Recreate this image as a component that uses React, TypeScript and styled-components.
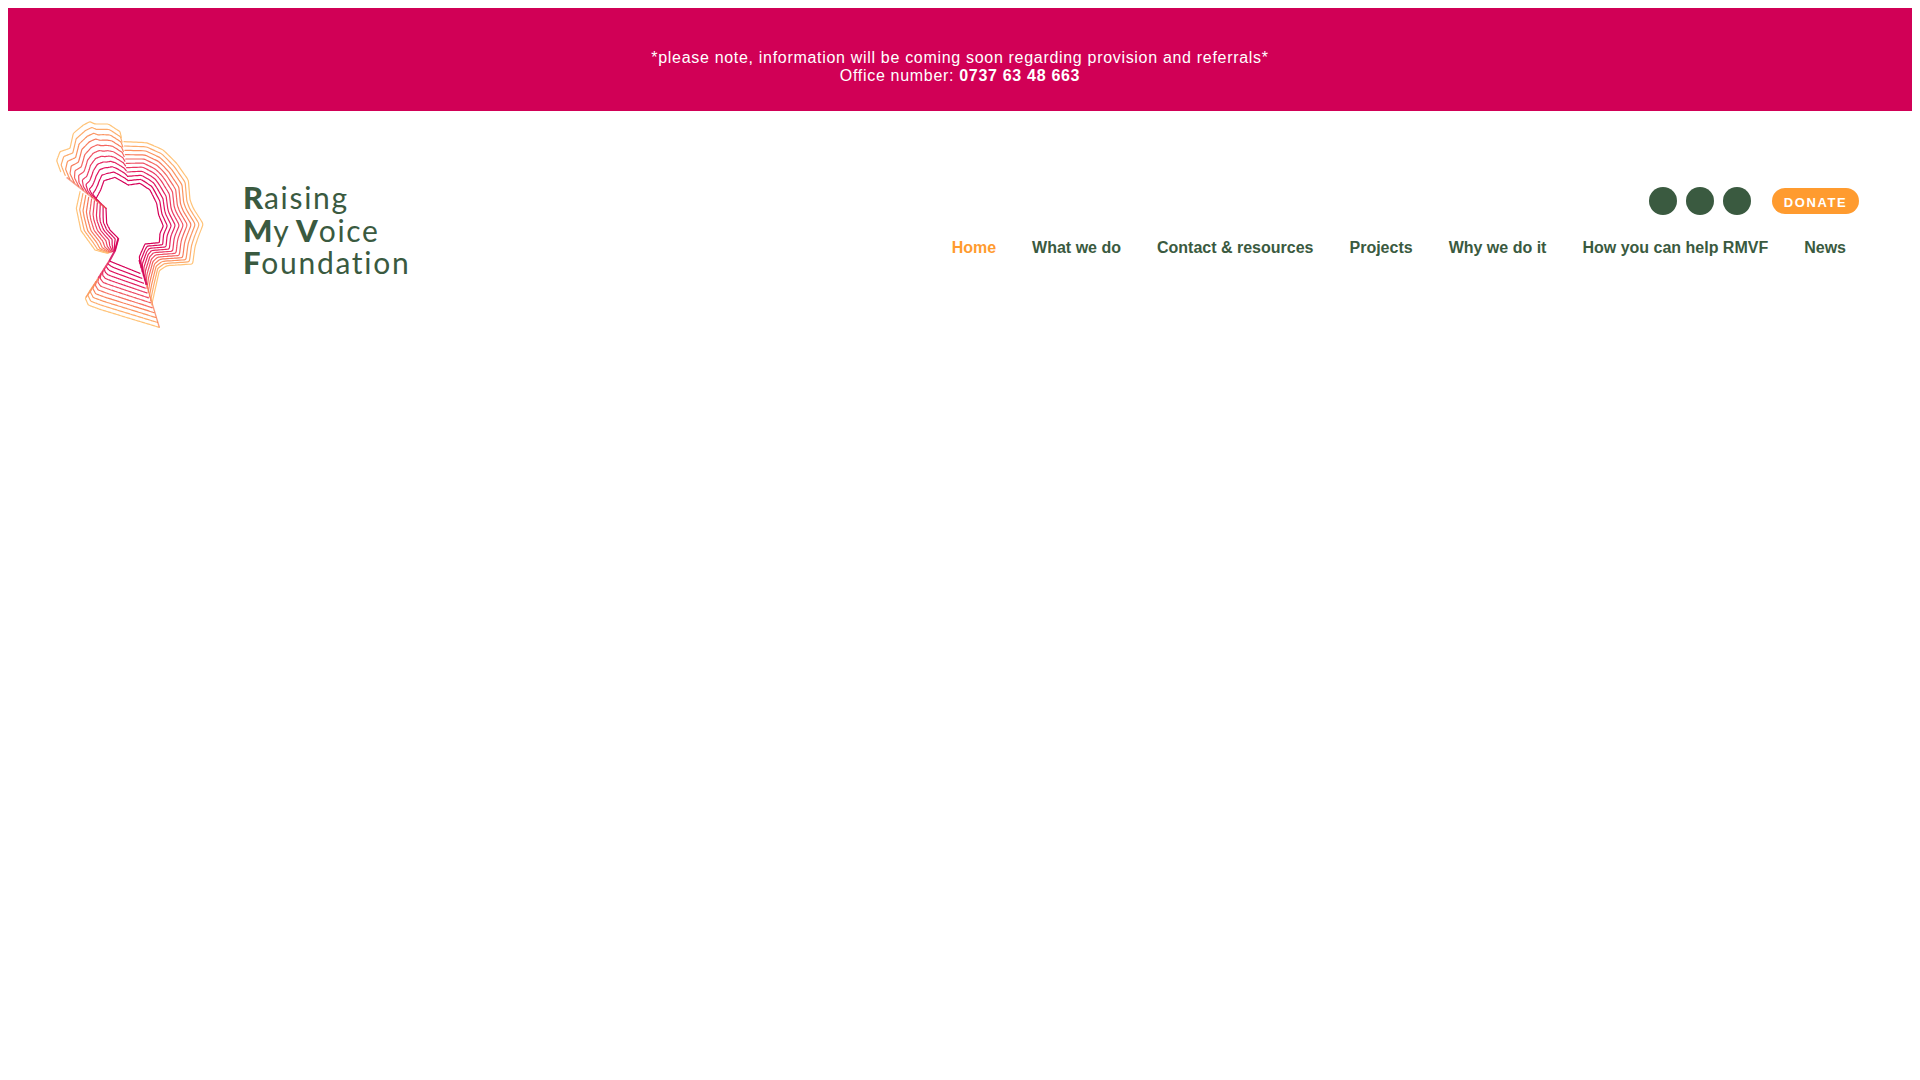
import React from "react";
import styled, { createGlobalStyle } from "styled-components";

const GREEN = "#3a5a40";
const ORANGE = "#ff9b2f";
const PINK = "#d10056";

const Global = createGlobalStyle`
  html, body { background: #fff; }
  body { margin: 8px; font-family: "Liberation Sans", Arial, sans-serif; }
`;

const Banner = styled.div`
  background: ${PINK};
  color: #fff;
  text-align: center;
  font-size: 16px;
  line-height: 18px;
  letter-spacing: 0.69px;
  padding: 41px 0 26px;
`;
const Phone = styled.strong`
  font-weight: 700;
`;
const Header = styled.header`
  display: flex;
  justify-content: space-between;
  align-items: flex-start;
  padding: 4px 48px 0 42px;
`;
const Brand = styled.a`
  display: flex;
  align-items: flex-start;
  gap: 33px;
`;
const LogoText = styled.div`
  margin-top: 66px;
  color: ${GREEN};
  font-family: Lato, "Liberation Sans", sans-serif;
  font-size: 30px;
  line-height: 32.5px;
  font-weight: 400;
  letter-spacing: 1.7px;
  word-spacing: -3px;
  white-space: nowrap;
`;
const Cap = styled.b`
  font-weight: 900;
  font-size: 31px;
  letter-spacing: 0.8px;
`;
const Right = styled.div`
  display: flex;
  flex-direction: column;
  align-items: flex-end;
  margin-top: 72px;
  gap: 24px;
`;
const TopRow = styled.div`
  display: flex;
  align-items: center;
  margin-right: 5px;
`;
const Social = styled.span`
  width: 28px;
  height: 28px;
  border-radius: 50%;
  background: ${GREEN};
  margin-right: 9px;
`;
const Donate = styled.a`
  display: block;
  width: 87px;
  height: 26px;
  line-height: 30px;
  margin-left: 12px;
  border-radius: 13px;
  background: ${ORANGE};
  color: #fff;
  font-size: 13px;
  font-weight: 700;
  letter-spacing: 1.6px;
  text-align: center;
`;
const Nav = styled.nav`
  display: flex;
`;
const NavLink = styled.a<{ $active?: boolean }>`
  padding: 0 18px;
  font-size: 16px;
  line-height: 18px;
  font-weight: 700;
  white-space: nowrap;
  color: ${(p) => (p.$active ? ORANGE : GREEN)};
`;

type P = [number, number];

function resample(pts: P[], n: number): P[] {
  const seg: number[] = [];
  let total = 0;
  for (let i = 1; i < pts.length; i++) {
    const d = Math.hypot(pts[i][0] - pts[i - 1][0], pts[i][1] - pts[i - 1][1]);
    seg.push(d);
    total += d;
  }
  const out: P[] = [];
  let k = 0;
  let acc = 0;
  for (let i = 0; i < n; i++) {
    const target = (total * i) / (n - 1);
    while (k < seg.length - 1 && acc + seg[k] < target) {
      acc += seg[k];
      k++;
    }
    const f = seg[k] ? Math.min(1, (target - acc) / seg[k]) : 0;
    out.push([
      pts[k][0] + (pts[k + 1][0] - pts[k][0]) * f,
      pts[k][1] + (pts[k + 1][1] - pts[k][1]) * f,
    ]);
  }
  return out;
}

const STOPS: [number, number, number][] = [
  [214, 0, 88],
  [226, 25, 95],
  [240, 80, 100],
  [250, 135, 90],
  [255, 195, 120],
];
function colorAt(t: number) {
  const x = t * (STOPS.length - 1);
  const i = Math.min(STOPS.length - 2, Math.floor(x));
  const f = x - i;
  const c = STOPS[i].map((v, j) => Math.round(v + (STOPS[i + 1][j] - v) * f));
  return `rgb(${c.join(",")})`;
}

function smoothPath(pts: P[]) {
  let d = `M${pts[0][0].toFixed(1)} ${pts[0][1].toFixed(1)}`;
  for (let i = 1; i < pts.length - 1; i++) {
    const mx = (pts[i][0] + pts[i + 1][0]) / 2;
    const my = (pts[i][1] + pts[i + 1][1]) / 2;
    d += `Q${pts[i][0].toFixed(1)} ${pts[i][1].toFixed(1)} ${mx.toFixed(1)} ${my.toFixed(1)}`;
  }
  const l = pts[pts.length - 1];
  return d + `L${l[0].toFixed(1)} ${l[1].toFixed(1)}`;
}

const BANDS: { inner: P[]; outer: P[]; n: number }[] = [
  {
    n: 11,
    inner: [[318, 325], [288, 296], [302, 270], [312, 242], [345, 232], [385, 255]],
    outer: [[182, 215], [170, 182], [180, 155], [210, 145], [220, 100], [250, 75], [270, 65], [285, 72], [325, 72], [360, 95], [364, 112]],
  },
  {
    n: 11,
    inner: [[385, 255], [420, 250], [450, 270], [470, 310], [476, 345], [490, 378], [480, 400], [478, 428], [435, 432], [418, 470], [420, 490]],
    outer: [[372, 125], [440, 128], [490, 150], [530, 190], [565, 240], [570, 300], [580, 325], [610, 372], [595, 410], [585, 440], [578, 492], [500, 497], [478, 512], [455, 615]],
  },
  {
    n: 10,
    inner: [[318, 325], [320, 370], [330, 390], [355, 415], [345, 452]],
    outer: [[240, 275], [229, 325], [243, 392], [285, 450], [322, 460]],
  },
  {
    n: 12,
    inner: [[328, 483], [420, 520]],
    outer: [[272, 568], [256, 595], [265, 615], [300, 628], [478, 682]],
  },
];

function HeadLogo() {
  const lines: { d: string; c: string }[] = [];
  BANDS.forEach(({ inner, outer, n }) => {
    const a = resample(inner, 90);
    const b = resample(outer, 90);
    for (let i = 0; i < n; i++) {
      const t = i / (n - 1);
      const pts = a.map((p, j): P => [p[0] + (b[j][0] - p[0]) * t, p[1] + (b[j][1] - p[1]) * t]);
      lines.push({ d: smoothPath(pts), c: colorAt(t) });
    }
  });
  return (
    <svg width={160} height={220} viewBox="150 45 480 660" fill="none" aria-hidden="true">
      {lines.map((l, i) => (
        <path key={i} d={l.d} stroke={l.c} strokeWidth={3.6} strokeLinejoin="round" strokeLinecap="round" />
      ))}
      <path d="M355 415 L345 452 L328 483" stroke={PINK} strokeOpacity={0.85} strokeWidth={6} />
      <path d="M328 483 L295 535" stroke="#e8305f" strokeOpacity={0.85} strokeWidth={6} />
      <path d="M295 535 L258 592" stroke="#fa8a5a" strokeOpacity={0.7} strokeWidth={4} />
      <path d="M418 480 L440 555" stroke={PINK} strokeOpacity={0.85} strokeWidth={6} />
      <path d="M440 555 L478 682" stroke="#f77a50" strokeOpacity={0.75} strokeWidth={4} />
      <path d="M318 325 L200 232" stroke="#f0603f" strokeOpacity={0.6} strokeWidth={5} />
    </svg>
  );
}

const NAV = ["Home", "What we do", "Contact & resources", "Projects", "Why we do it", "How you can help RMVF", "News"];

export default function App() {
  return (
    <>
      <Global />
      <Banner>
        *please note, information will be coming soon regarding provision and referrals*
        <br />
        Office number: <Phone>0737 63 48 663</Phone>
      </Banner>
      <Header>
        <Brand>
          <HeadLogo />
          <LogoText>
            <div><Cap>R</Cap>aising</div>
            <div><Cap>M</Cap>y <Cap>V</Cap>oice</div>
            <div><Cap>F</Cap>oundation</div>
          </LogoText>
        </Brand>
        <Right>
          <TopRow>
            <Social />
            <Social />
            <Social />
            <Donate>DONATE</Donate>
          </TopRow>
          <Nav>
            {NAV.map((n, i) => (
              <NavLink key={n} $active={i === 0}>{n}</NavLink>
            ))}
          </Nav>
        </Right>
      </Header>
    </>
  );
}
